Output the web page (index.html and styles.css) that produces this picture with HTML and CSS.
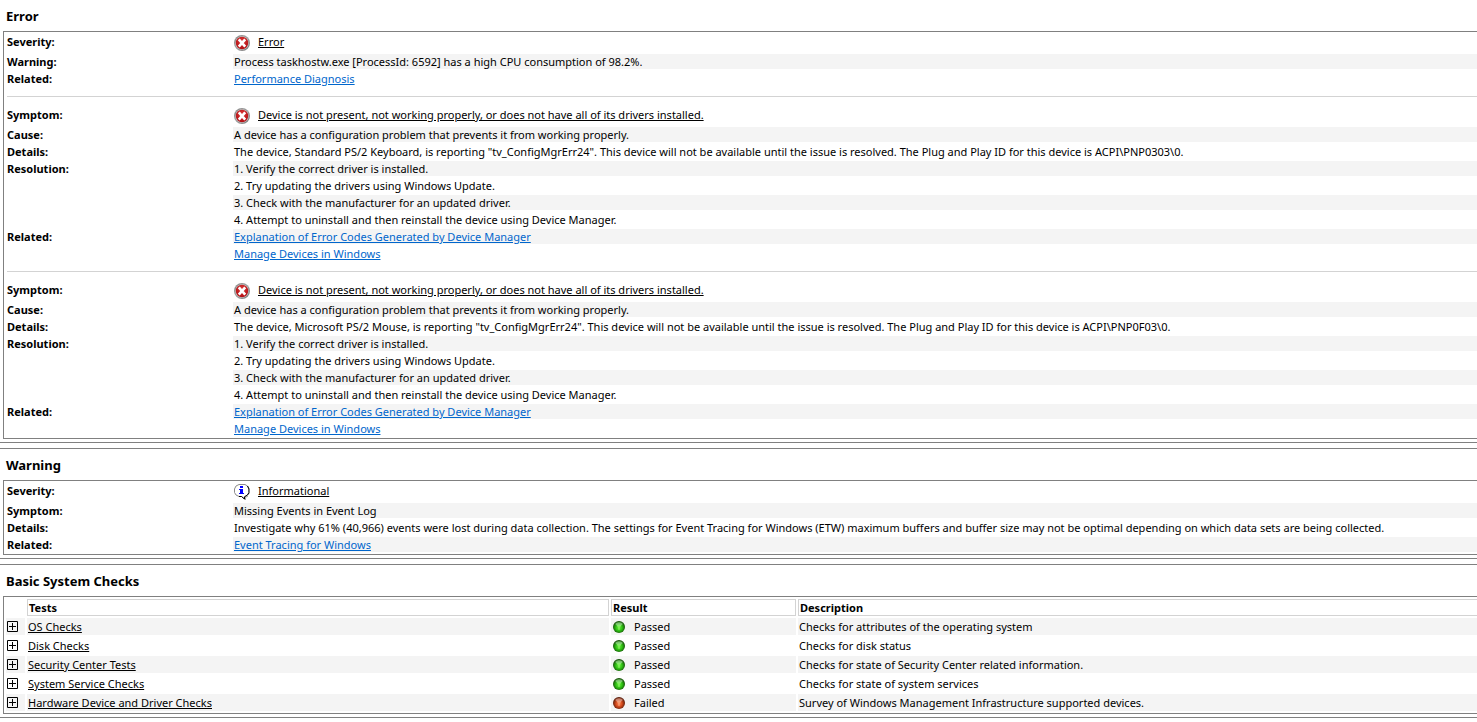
FILE: index.html
```html
<!DOCTYPE html>
<html lang="en">
<head>
<meta charset="utf-8">
<title>System Diagnostics Report</title>
<link rel="stylesheet" href="styles.css">
</head>
<body>
<svg class="defs" aria-hidden="true">
  <defs>
    <radialGradient id="red" cx="50%" cy="35%" r="65%"><stop offset="0" stop-color="#dc3a38"/><stop offset="1" stop-color="#b00d12"/></radialGradient>
    <linearGradient id="rim" x1="0" y1="0" x2="1" y2="1"><stop offset="0" stop-color="#858585"/><stop offset=".5" stop-color="#a0a0a0"/><stop offset="1" stop-color="#747474"/></linearGradient>
    <radialGradient id="pass" cx="50%" cy="55%" r="52%"><stop offset="0" stop-color="#6cf03c"/><stop offset=".5" stop-color="#2fc414"/><stop offset="1" stop-color="#155008"/></radialGradient>
    <radialGradient id="fail" cx="50%" cy="55%" r="52%"><stop offset="0" stop-color="#ff8a58"/><stop offset=".5" stop-color="#d44a1c"/><stop offset="1" stop-color="#5a1c0a"/></radialGradient>
    <symbol id="i-error" viewBox="0 0 16 16">
      <circle cx="8" cy="8" r="8" fill="url(#rim)"/><circle cx="8" cy="8" r="6.700" fill="#ccc"/><circle cx="8" cy="8" r="6.200" fill="url(#red)"/>
      <path d="M4.800 4.300l6.400 7.400M11.200 4.300l-6.400 7.400" stroke="#fff" stroke-width="2.600"/>
    </symbol>
    <symbol id="i-info" viewBox="0 0 16 16">
      <path d="M5 .5h6l2.500 1.500L15 5v3.500l-1.500 2.500-3 1.800V15L7.500 12.500H5L2 11 .5 8.500V5L2 2z" fill="#fff" stroke="#8c8c8c"/>
      <path d="M13.500 2L15 5v3.500l-1.500 2.500-3 1.800V15L7.500 12.500H5" fill="none" stroke="#000"/>
      <path d="M15.500 5v4.500M14 12l-2.500 1.500V16" fill="none" stroke="#888" stroke-width=".8"/>
      <path d="M6 2h3v2H6zM5 5h4v4h1v1H5V9h1V6H5z" fill="#00f"/>
    </symbol>
    <symbol id="i-pass" viewBox="0 0 12 12"><circle cx="6" cy="6" r="6" fill="url(#pass)"/><ellipse cx="6" cy="3" rx="3.500" ry="1.800" fill="#fff" opacity=".38"/><path d="M4 5h4M6 5v4" stroke="#b8ff94" opacity=".6"/></symbol>
    <symbol id="i-fail" viewBox="0 0 12 12"><circle cx="6" cy="6" r="6" fill="url(#fail)"/><ellipse cx="6" cy="3" rx="3.500" ry="1.800" fill="#fff" opacity=".38"/><path d="M4 5h4M6 5v4" stroke="#ffc8a4" opacity=".6"/></symbol>
    <symbol id="i-plus" viewBox="0 0 11 11"><path d="M.5.5h10v10H.5zM2 5.500h7M5.500 2v7" fill="none" stroke="#000"/></symbol>
  </defs>
</svg>

<section class="section">
  <h2>Error</h2>
  <div class="box">
    <dl class="facts">
      <dt>Severity:</dt><dd class="lead"><svg class="icon"><use href="#i-error"/></svg><a class="topic" href="#error">Error</a></dd>
      <dt>Warning:</dt><dd>Process taskhostw.exe [ProcessId: 6592] has a high CPU consumption of 98.2%.</dd>
      <dt>Related:</dt><dd><a href="#performance">Performance Diagnosis</a></dd>
    </dl>
    <hr>
    <dl class="facts">
      <dt>Symptom:</dt><dd class="lead"><svg class="icon"><use href="#i-error"/></svg><a class="topic" href="#keyboard">Device is not present, not working properly, or does not have all of its drivers installed.</a></dd>
      <dt>Cause:</dt><dd>A device has a configuration problem that prevents it from working properly.</dd>
      <dt>Details:</dt><dd>The device, Standard PS/2 Keyboard, is reporting "tv_ConfigMgrErr24". This device will not be available until the issue is resolved. The Plug and Play ID for this device is ACPI\PNP0303\0.</dd>
      <dt>Resolution:</dt><dd>1. Verify the correct driver is installed.</dd>
      <dd>2. Try updating the drivers using Windows Update.</dd>
      <dd>3. Check with the manufacturer for an updated driver.</dd>
      <dd>4. Attempt to uninstall and then reinstall the device using Device Manager.</dd>
      <dt>Related:</dt><dd><a href="#codes">Explanation of Error Codes Generated by Device Manager</a></dd>
      <dd><a href="#manage">Manage Devices in Windows</a></dd>
    </dl>
    <hr>
    <dl class="facts">
      <dt>Symptom:</dt><dd class="lead"><svg class="icon"><use href="#i-error"/></svg><a class="topic" href="#mouse">Device is not present, not working properly, or does not have all of its drivers installed.</a></dd>
      <dt>Cause:</dt><dd>A device has a configuration problem that prevents it from working properly.</dd>
      <dt>Details:</dt><dd>The device, Microsoft PS/2 Mouse, is reporting "tv_ConfigMgrErr24". This device will not be available until the issue is resolved. The Plug and Play ID for this device is ACPI\PNP0F03\0.</dd>
      <dt>Resolution:</dt><dd>1. Verify the correct driver is installed.</dd>
      <dd>2. Try updating the drivers using Windows Update.</dd>
      <dd>3. Check with the manufacturer for an updated driver.</dd>
      <dd>4. Attempt to uninstall and then reinstall the device using Device Manager.</dd>
      <dt>Related:</dt><dd><a href="#codes">Explanation of Error Codes Generated by Device Manager</a></dd>
      <dd><a href="#manage">Manage Devices in Windows</a></dd>
    </dl>
  </div>
</section>

<section class="section">
  <h2>Warning</h2>
  <div class="box">
    <dl class="facts">
      <dt>Severity:</dt><dd class="lead"><svg class="icon"><use href="#i-info"/></svg><a class="topic" href="#info">Informational</a></dd>
      <dt>Symptom:</dt><dd>Missing Events in Event Log</dd>
      <dt>Details:</dt><dd>Investigate why 61% (40,966) events were lost during data collection. The settings for Event Tracing for Windows (ETW) maximum buffers and buffer size may not be optimal depending on which data sets are being collected.</dd>
      <dt>Related:</dt><dd><a href="#etw">Event Tracing for Windows</a></dd>
    </dl>
  </div>
</section>

<section class="section">
  <h2>Basic System Checks</h2>
  <div class="box">
    <table class="checks">
      <colgroup><col class="c-toggle"><col class="c-test"><col class="c-result"><col></colgroup>
      <thead><tr><td></td><th scope="col">Tests</th><th scope="col">Result</th><th scope="col">Description</th></tr></thead>
      <tbody>
        <tr><td><button type="button" aria-label="Expand OS Checks"><svg><use href="#i-plus"/></svg></button></td><td><a class="topic" href="#os">OS Checks</a></td><td><span class="result"><svg><use href="#i-pass"/></svg>Passed</span></td><td>Checks for attributes of the operating system</td></tr>
        <tr><td><button type="button" aria-label="Expand Disk Checks"><svg><use href="#i-plus"/></svg></button></td><td><a class="topic" href="#disk">Disk Checks</a></td><td><span class="result"><svg><use href="#i-pass"/></svg>Passed</span></td><td>Checks for disk status</td></tr>
        <tr><td><button type="button" aria-label="Expand Security Center Tests"><svg><use href="#i-plus"/></svg></button></td><td><a class="topic" href="#security">Security Center Tests</a></td><td><span class="result"><svg><use href="#i-pass"/></svg>Passed</span></td><td>Checks for state of Security Center related information.</td></tr>
        <tr><td><button type="button" aria-label="Expand System Service Checks"><svg><use href="#i-plus"/></svg></button></td><td><a class="topic" href="#services">System Service Checks</a></td><td><span class="result"><svg><use href="#i-pass"/></svg>Passed</span></td><td>Checks for state of system services</td></tr>
        <tr><td><button type="button" aria-label="Expand Hardware Device and Driver Checks"><svg><use href="#i-plus"/></svg></button></td><td><a class="topic" href="#hardware">Hardware Device and Driver Checks</a></td><td><span class="result"><svg><use href="#i-fail"/></svg>Failed</span></td><td>Survey of Windows Management Infrastructure supported devices.</td></tr>
      </tbody>
    </table>
  </div>
</section>
</body>
</html>
```
FILE: styles.css
```css
* { box-sizing: border-box; }
body {
  margin: 0;
  background: #fff;
  color: #000;
  font: 11px/15px "Noto Sans", "Open Sans", sans-serif;
  overflow-x: hidden;
}
.defs { position: absolute; width: 0; height: 0; }
a { color: #06c; }
a.topic { color: #000; }

.section {
  padding: 0 0 3px 3px;
  border-bottom: 1px solid #808080;
}
.section + .section {
  margin-top: 5px;
  border-top: 1px solid #808080;
}
h2 {
  margin: 0;
  padding: 1px 0 0 3px;
  font-size: 13px;
  line-height: 30px;
  font-weight: 700;
}
.box {
  border: 1px solid #808080;
  border-right: 0;
  overflow: hidden;
}

.facts {
  display: grid;
  grid-template-columns: 225px 1fr;
  gap: 2px;
  margin: 0;
  padding: 2px 0 2px 2px;
}
.facts dt {
  grid-column: 1;
  padding-left: 1px;
  font-weight: 700;
}
.facts dd {
  grid-column: 2;
  min-height: 15px;
  margin: 0;
  padding-left: 1px;
}
.facts dd:nth-of-type(even) { background: #f4f4f4; }
.facts .lead {
  display: flex;
  align-items: flex-start;
  gap: 8px;
  height: 18px;
}
.icon { width: 16px; height: 16px; margin-top: 1px; }
hr {
  height: 1px;
  margin: 8px 0 8px 3px;
  border: 0;
  background: #d3d3d3;
}

.checks {
  width: calc(100% + 4px);
  table-layout: fixed;
  border-spacing: 2px;
}
.c-toggle { width: 19px; }
.c-test { width: 582px; }
.c-result { width: 185px; }
.checks th,
.checks td {
  height: 17px;
  padding: 0 1px;
  text-align: left;
  white-space: nowrap;
}
.checks th { border: 1px solid #d3d3d3; }
.checks tbody tr:nth-child(odd) td { background: #f4f4f4; }
.checks button {
  display: block;
  width: 11px;
  height: 11px;
  padding: 0;
  border: 0;
  background: none;
}
.checks button svg { display: block; width: 11px; height: 11px; }
.result { display: flex; align-items: center; gap: 9px; padding-left: 1px; }
.result svg { width: 12px; height: 12px; }
```
